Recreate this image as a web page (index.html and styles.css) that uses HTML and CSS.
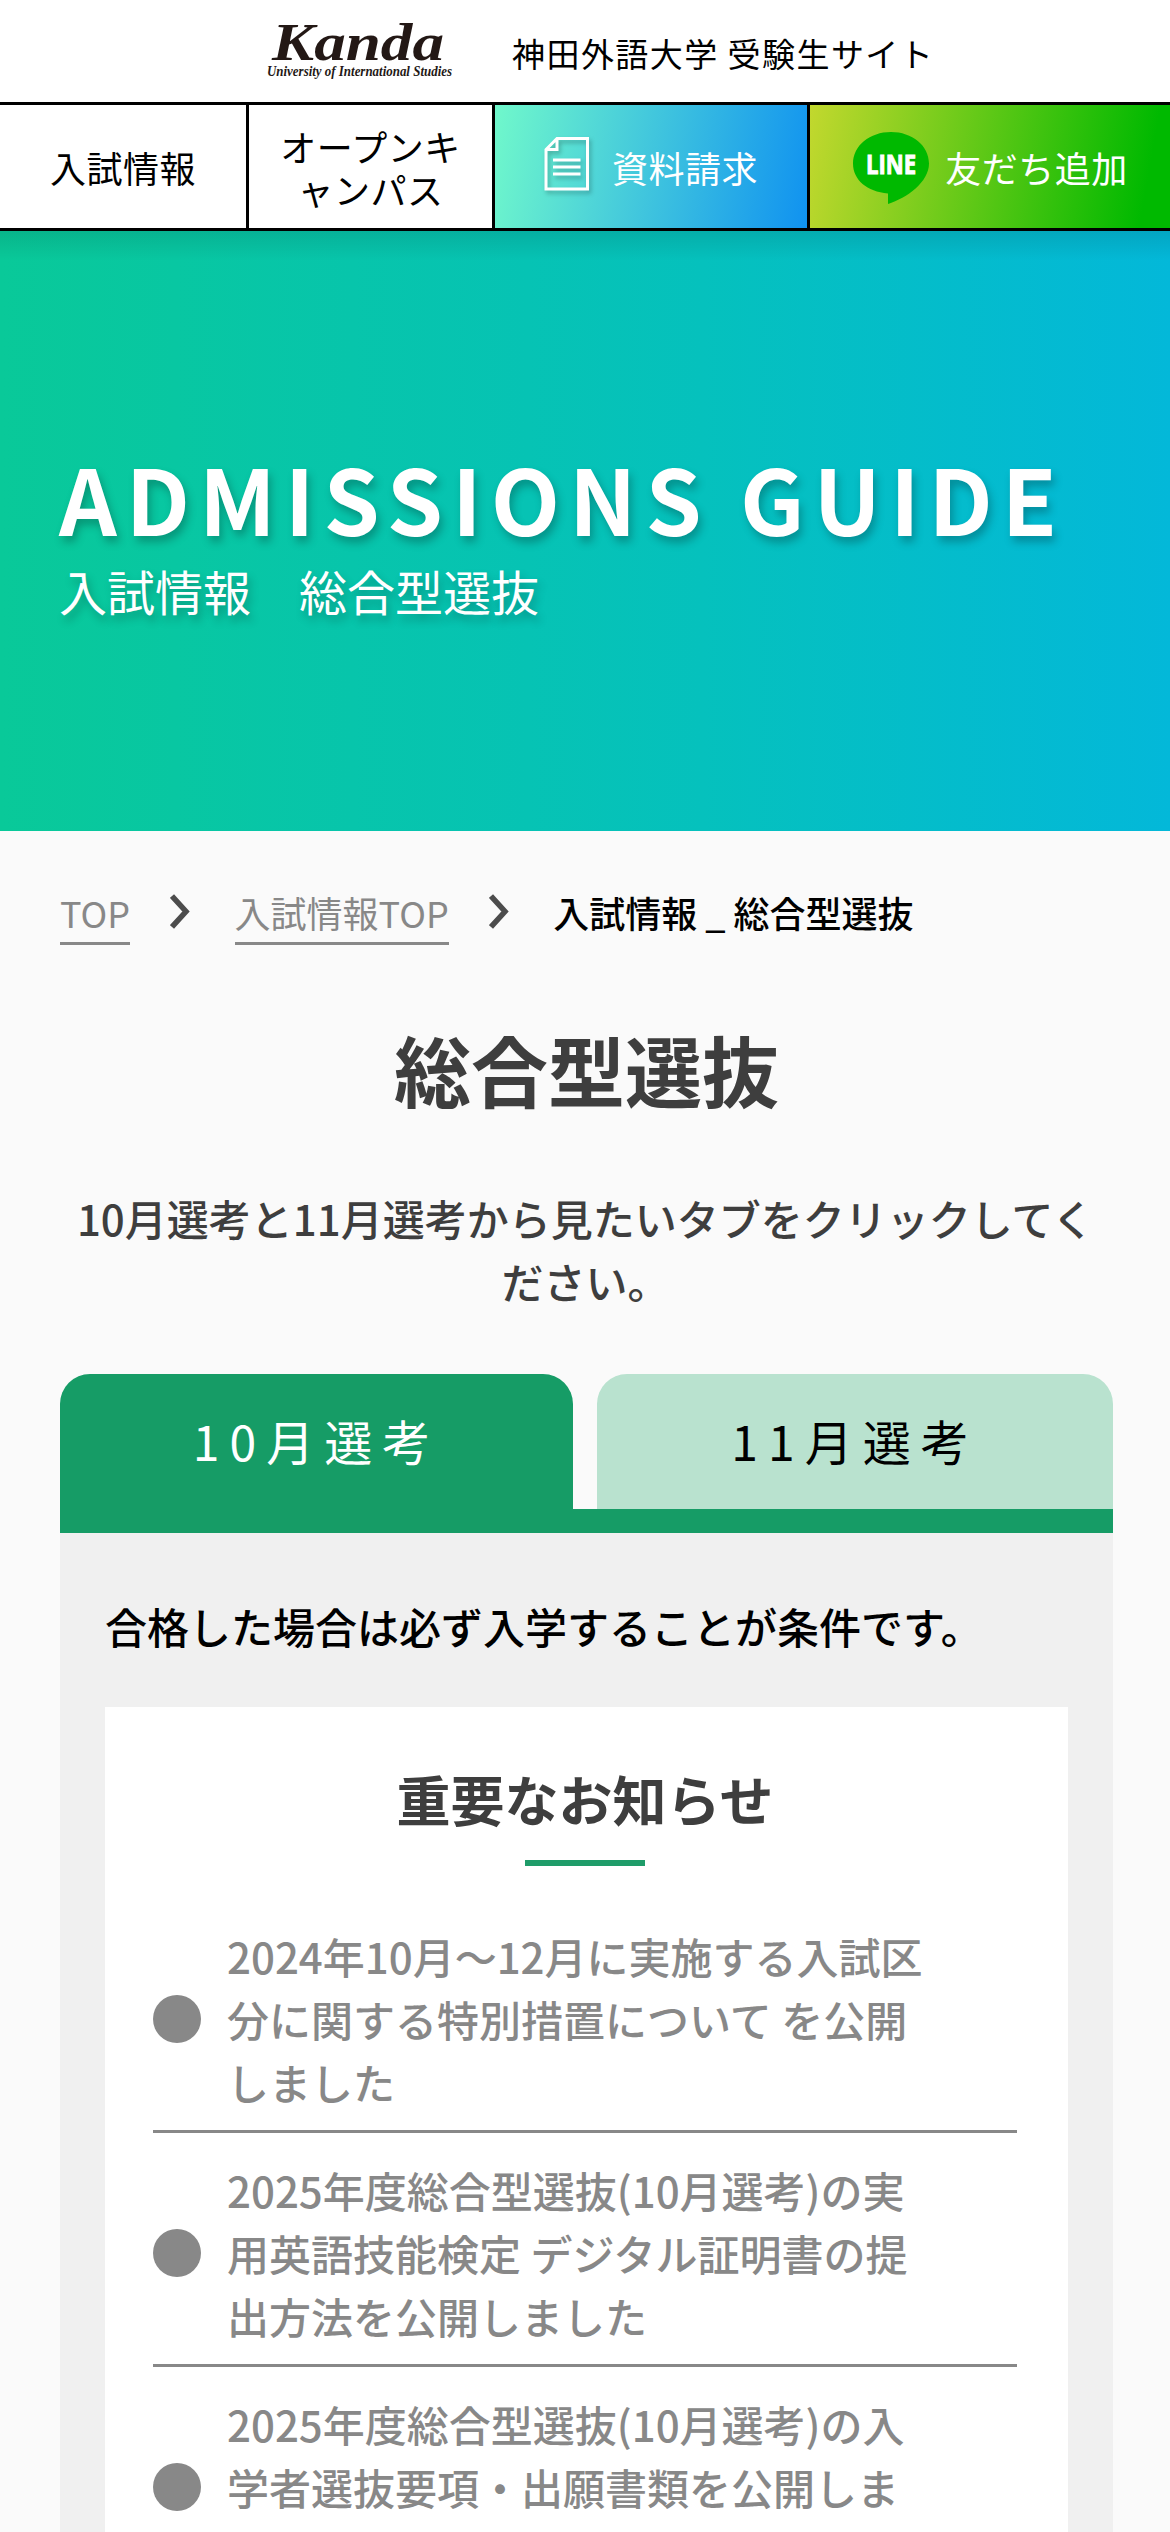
FILE: index.html
```html
<!DOCTYPE html>
<html lang="ja">
<head>
<meta charset="utf-8">
<title>入試情報 _ 総合型選抜</title>
<link rel="stylesheet" href="styles.css">
</head>
<body>
<header class="header">
  <svg class="logo" viewBox="0 0 186 60" role="img" aria-label="Kanda University of International Studies">
    <text class="logo-name" x="6" y="40" textLength="172" lengthAdjust="spacingAndGlyphs">Kanda</text>
    <text class="logo-sub" x="1" y="56" textLength="185" lengthAdjust="spacingAndGlyphs">University of International Studies</text>
  </svg>
  <p class="site-name">神田外語大学 受験生サイト</p>
</header>
<nav class="nav">
  <a class="nav-item">入試情報</a>
  <a class="nav-item">オープンキ<br>ャンパス</a>
  <a class="nav-item nav-request">
    <svg class="icon-doc" viewBox="0 0 46 54"><path d="M13 1.500H43.500v50.500H2V12.500zM13 1.500v11H2M9 23H36.500M9 30H36.500M9 37H36.500"/></svg>
    <span>資料請求</span>
  </a>
  <a class="nav-item nav-line">
    <svg class="icon-line" viewBox="0 0 76 72"><path d="M38 0C17 0 0 13.500 0 31.500 0 48 14 59.500 35 61.500V72C54 66 76 50 76 31.500 76 13.500 59 0 38 0z"/><text x="13" y="41.500" textLength="50" lengthAdjust="spacingAndGlyphs">LINE</text></svg>
    <span>友だち追加</span>
  </a>
</nav>
<section class="hero">
  <h1 class="hero-title">ADMISSIONS GUIDE</h1>
  <p class="hero-sub">入試情報　総合型選抜</p>
</section>
<main class="main">
  <nav class="crumbs">
    <a class="crumb-link">TOP</a>
    <svg class="chevron" viewBox="0 0 20 36"><path d="M2 2L16 17.500L2 33"/></svg>
    <a class="crumb-link">入試情報TOP</a>
    <svg class="chevron" viewBox="0 0 20 36"><path d="M2 2L16 17.500L2 33"/></svg>
    <span class="crumb-current">入試情報 _ 総合型選抜</span>
  </nav>
  <h2 class="title">総合型選抜</h2>
  <p class="lead">10月選考と11月選考から見たいタブをクリックしてください。</p>
  <div class="tabs">
    <a class="tab tab-active">10月選考</a>
    <a class="tab">11月選考</a>
  </div>
  <section class="panel">
    <p class="condition">合格した場合は必ず入学することが条件です。</p>
    <div class="notice">
      <h3 class="notice-title">重要なお知らせ</h3>
      <ul class="news">
        <li class="news-item"><span class="news-text">2024年10月～12月に実施する入試区分に関する特別措置について を公開しました</span></li>
        <li class="news-item"><span class="news-text">2025年度総合型選抜(10月選考)の実用英語技能検定 デジタル証明書の提出方法を公開しました</span></li>
        <li class="news-item"><span class="news-text">2025年度総合型選抜(10月選考)の入学者選抜要項・出願書類を公開しました</span></li>
      </ul>
    </div>
  </section>
</main>
</body>
</html>
```
FILE: styles.css
```css
* { box-sizing: border-box; margin: 0; padding: 0; }
body {
  width: 1170px;
  height: 2532px;
  overflow: hidden;
  background: #fafafa;
  color: #000;
  font-family: "Noto Sans CJK JP", sans-serif;
}
.header {
  display: flex;
  align-items: flex-start;
  height: 102px;
  padding: 20px 0 0 266px;
  background: #fff;
}
.logo { width: 186px; height: 60px; overflow: visible; }
.logo text { fill: #231815; font-family: "Liberation Serif", serif; font-style: italic; font-weight: bold; }
.logo .logo-name { font-size: 53px; }
.logo .logo-sub { font-size: 14px; }
.site-name {
  margin: 8px 0 0 60px;
  font-size: 33px;
  line-height: 50px;
  letter-spacing: 1.450px;
}
.nav {
  display: grid;
  grid-template-columns: 246px 243px 312px 360px;
  gap: 3px;
  height: 129px;
  padding: 3px 0;
  background: #000;
}
.nav-item {
  display: flex;
  align-items: center;
  justify-content: center;
  padding-top: 2px;
  background: #fff;
  font-size: 36px;
  line-height: 43px;
  letter-spacing: .500px;
  text-align: center;
}
.nav-request { gap: 22px; color: #fff; background: linear-gradient(100deg, #70f8cb, #1092f0); }
.nav-line { gap: 16px; padding-left: 1px; color: #fff; background: linear-gradient(100deg, #c2d82e, #00b900 92%); }
.icon-doc { width: 46px; height: 54px; margin-top: -8px; fill: none; stroke: #fff; stroke-width: 3; filter: drop-shadow(2px 3px 2px rgba(0, 0, 0, .25)); }
.icon-line { width: 76px; height: 72px; margin-top: 1px; fill: #00b900; }
.icon-line text { fill: #fff; stroke: #fff; stroke-width: 1; font: bold 26px "Open Sans", sans-serif; letter-spacing: 0; }
.hero {
  height: 600px;
  padding: 212px 60px 0 59px;
  color: #fff;
  background:
    linear-gradient(to bottom, rgba(0, 0, 0, .1), transparent 30px),
    linear-gradient(to right, #09c999, #05c1bd 60%, #03b8d9);
  text-shadow: 3px 6px 9px rgba(0, 0, 0, .25);
}
.hero-title { font-size: 90px; line-height: 108px; letter-spacing: 9px; white-space: nowrap; }
.hero-sub { font-size: 48px; line-height: 72px; margin-top: 3px; }
.main { padding: 0 57px 0 60px; }
.crumbs { display: flex; align-items: flex-start; padding-top: 54px; font-size: 36px; line-height: 54px; }
.crumb-link { padding-bottom: 3px; color: #888; border-bottom: 3px solid #888; }
.chevron { width: 20px; height: 36px; margin: 9px 44.500px 0 40px; fill: none; stroke: #4c4c4c; stroke-width: 5.500; }
.crumb-current { font-weight: 500; }
.title { margin-top: 66px; text-align: center; font-size: 77px; line-height: 116px; color: #3e3e3e; }
.lead { margin-top: 59px; padding: 0 16px 0 14px; text-align: center; font-size: 42px; line-height: 63px; font-weight: 500; color: #3e3e3e; }
.tabs { display: grid; grid-template-columns: 513px 516px; gap: 24px; margin-top: 62px; border-bottom: 24px solid #169c66; }
.tab { height: 135px; border-radius: 30px 30px 0 0; background: #b9e2cf; text-align: center; font-size: 48px; line-height: 133px; letter-spacing: 10px; }
.tab-active { background: #169c66; color: #fff; }
.panel { height: 1010px; padding: 61px 45px 0; background: #f0f0f0; }
.condition { font-size: 42px; line-height: 63px; font-weight: 500; }
.notice { margin-top: 50px; height: 900px; padding: 51px 51px 0 48px; background: #fff; }
.notice-title { text-align: center; font-size: 54px; line-height: 81px; color: #3e3e3e; }
.notice-title::after { content: ""; display: block; width: 120px; height: 6px; margin: 21px auto 0; background: #1f9c69; }
.news { margin-top: 33px; list-style: none; }
.news-item { display: flex; align-items: center; gap: 26px; padding: 25px 0 17px; border-bottom: 3px solid #888; color: #888; font-size: 42px; line-height: 63px; font-weight: 500; }
.news-item::before { content: ""; flex: none; width: 48px; height: 48px; border-radius: 50%; background: #888; }
.news-text { width: 705px; }
```
